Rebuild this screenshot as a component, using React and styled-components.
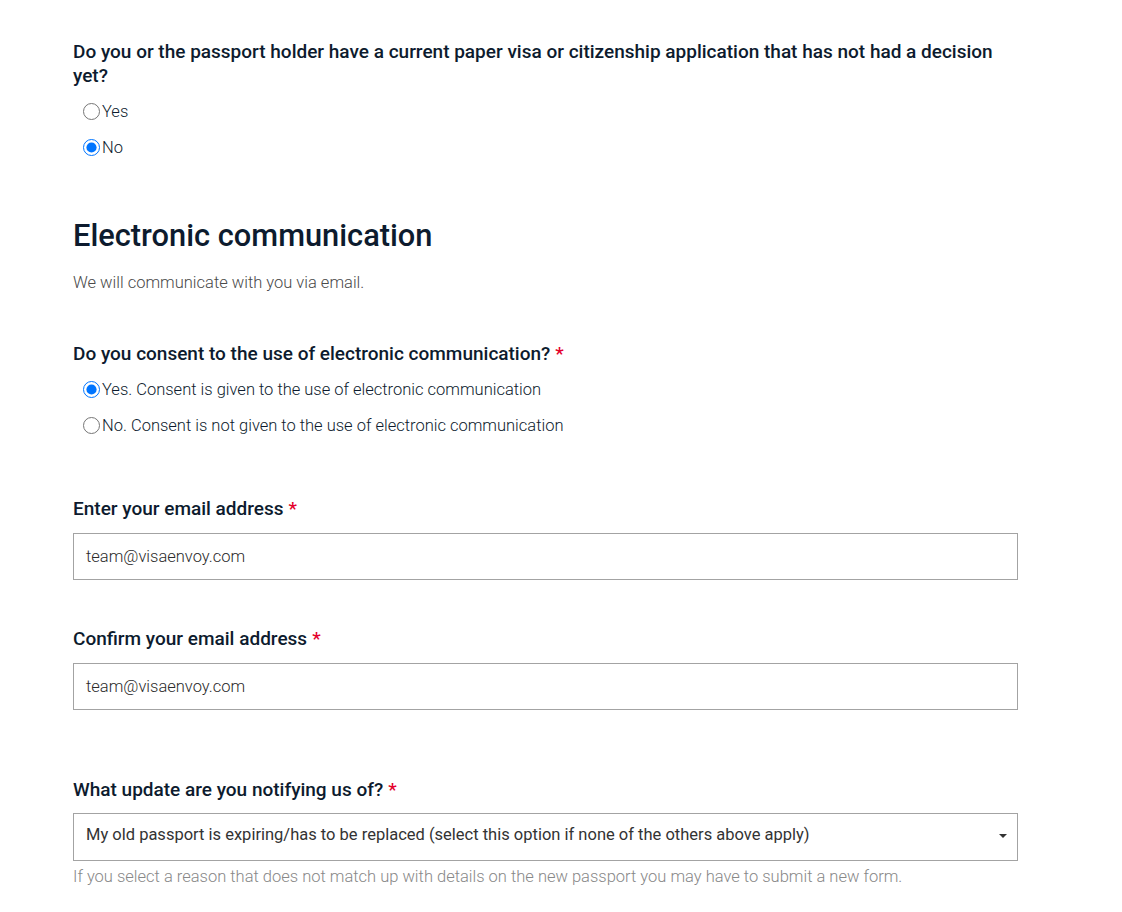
import React from "react";
import styled, { createGlobalStyle } from "styled-components";

const Global = createGlobalStyle`
  html, body { margin: 0; padding: 0; background: #fff; }
  body { font-family: Roboto, "Liberation Sans", sans-serif; color: #0d1b2e; }
  * { box-sizing: border-box; }
`;

const Page = styled.div`
  width: 945px;
  margin-left: 73px;
  padding-top: 40px;
  display: flex;
  flex-direction: column;
`;

const Group = styled.div`
  display: flex;
  flex-direction: column;
  margin-top: ${(p) => p.$mt || 0}px;
`;

const Question = styled.div`
  font-size: 19px;
  line-height: 24px;
  font-weight: 500;
  color: #0d1b2e;
  margin-bottom: ${(p) => p.$mb || 0}px;
`;

const Req = styled.span`
  color: #e4002b;
  margin-left: 5px;
`;

const Options = styled.div`
  display: flex;
  flex-direction: column;
`;

const OptionRow = styled.label`
  display: flex;
  align-items: center;
  height: 36px;
  font-size: 16.5px;
  font-weight: 300;
  color: #0d1b2e;
`;

const Radio = styled.input.attrs({ type: "radio" })`
  width: 17px;
  height: 17px;
  margin: 0 2px 0 10px;
  accent-color: #0075ff;
`;

const Heading = styled.h2`
  margin: 0;
  font-size: 30.8px;
  line-height: 40px;
  font-weight: 500;
  color: #0d1b2e;
`;

const Intro = styled.p`
  margin: 15px 0 0;
  font-size: 16.5px;
  line-height: 24px;
  font-weight: 300;
  color: #4a4a4a;
`;

const Field = styled.div`
  width: 945px;
  height: ${(p) => p.$h || 47}px;
  border: 1px solid #a3a3a3;
  display: flex;
  align-items: center;
  padding: 0 12px ${(p) => p.$pb || 0}px;
  font-size: 16.5px;
  font-weight: 300;
  color: #2b2b2b;
`;

const SelectText = styled.span`
  flex: 1;
  font-weight: 400;
  color: #333;
`;

const Caret = styled.span`
  width: 0;
  height: 0;
  border-left: 4px solid transparent;
  border-right: 4px solid transparent;
  border-top: 4px solid #333;
  margin-right: -2px;
  margin-top: 4px;
`;

const Help = styled.div`
  margin-top: 4px;
  font-size: 16.5px;
  line-height: 24px;
  font-weight: 300;
  color: #888;
`;

export default function App() {
  return (
    <>
      <Global />
      <Page>
        <Group>
          <Question $mb={5}>
            Do you or the passport holder have a current paper visa or citizenship application that has not had a decision yet?
          </Question>
          <Options>
            <OptionRow><Radio name="q1" />Yes</OptionRow>
            <OptionRow><Radio name="q1" defaultChecked />No</OptionRow>
          </Options>
        </Group>

        <Group $mt={51}>
          <Heading>Electronic communication</Heading>
          <Intro>We will communicate with you via email.</Intro>
        </Group>

        <Group $mt={47}>
          <Question $mb={5}>
            Do you consent to the use of electronic communication?<Req>*</Req>
          </Question>
          <Options>
            <OptionRow><Radio name="q2" defaultChecked />Yes. Consent is given to the use of electronic communication</OptionRow>
            <OptionRow><Radio name="q2" />No. Consent is not given to the use of electronic communication</OptionRow>
          </Options>
        </Group>

        <Group $mt={54}>
          <Question $mb={12}>
            Enter your email address<Req>*</Req>
          </Question>
          <Field>team@visaenvoy.com</Field>
        </Group>

        <Group $mt={47}>
          <Question $mb={12}>
            Confirm your email address<Req>*</Req>
          </Question>
          <Field>team@visaenvoy.com</Field>
        </Group>

        <Group $mt={68}>
          <Question $mb={11}>
            What update are you notifying us of?<Req>*</Req>
          </Question>
          <Field $h={48} $pb={6}>
            <SelectText>My old passport is expiring/has to be replaced (select this option if none of the others above apply)</SelectText>
            <Caret />
          </Field>
          <Help>If you select a reason that does not match up with details on the new passport you may have to submit a new form.</Help>
        </Group>
      </Page>
    </>
  );
}
